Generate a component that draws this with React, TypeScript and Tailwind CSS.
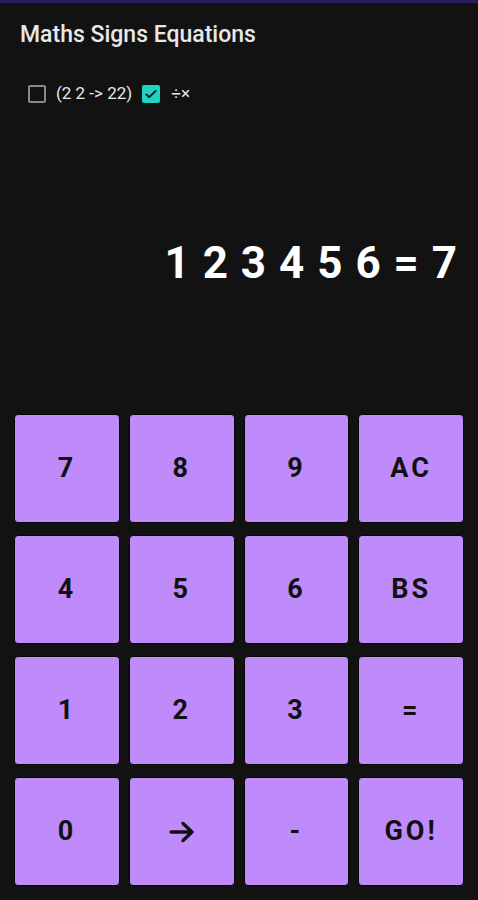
const keys = [
  "7", "8", "9", "AC",
  "4", "5", "6", "BS",
  "1", "2", "3", "=",
  "0", "→", "-", "GO!",
];

function Arrow() {
  return (
    <svg width="28" height="24" viewBox="0 0 28 24" fill="none" stroke="#111" strokeWidth="3.4" strokeLinecap="round" strokeLinejoin="round">
      <path d="M3 12h21M15 3.5l9 8.5-9 8.5" />
    </svg>
  );
}

export default function App() {
  return (
    <div
      className="w-[478px] h-[900px] bg-[#121212] border-t-[3px] border-[#2a1d5c] flex flex-col overflow-hidden"
      style={{ fontFamily: "Roboto, 'Noto Sans', sans-serif" }}
    >
      <h1 className="text-[23px] font-medium text-[#e8e8e8] pl-[20px] pt-[18px] leading-[28px]">
        Maths Signs Equations
      </h1>

      <div className="flex items-center pl-[28px] mt-[35px] text-[17px] text-[#e8e8e8] h-[20px]">
        <span className="w-[18px] h-[18px] rounded-[2px] border-2 border-[#8a8a8a]" />
        <span className="ml-[10px]">(2 2 -&gt; 22)</span>
        <span className="ml-[10px] w-[18px] h-[18px] rounded-[2px] bg-[#1fd3c2] flex items-center justify-center">
          <svg width="14" height="14" viewBox="0 0 24 24" fill="none" stroke="#121212" strokeWidth="3.2" strokeLinecap="round" strokeLinejoin="round">
            <path d="M4 12.5l5 5L20 6.5" />
          </svg>
        </span>
        <span className="ml-[11px]">÷×</span>
      </div>

      <div className="flex justify-end pr-[20px] mt-[129px]">
        <span className="text-[44px] font-bold text-white tracking-[1px] leading-[60px]">
          1 2 3 4 5 6 = 7
        </span>
      </div>

      <div className="grid grid-cols-4 gap-x-[9px] gap-y-[12px] px-[14px] mt-[121px]">
        {keys.map((k) => (
          <button
            key={k}
            className="h-[109px] rounded-[4px] bg-[#bf8bfb] border border-[#050505] text-[27px] font-bold text-[#111] tracking-[3px] flex items-center justify-center"
          >
            {k === "→" ? <Arrow /> : k}
          </button>
        ))}
      </div>
    </div>
  );
}
